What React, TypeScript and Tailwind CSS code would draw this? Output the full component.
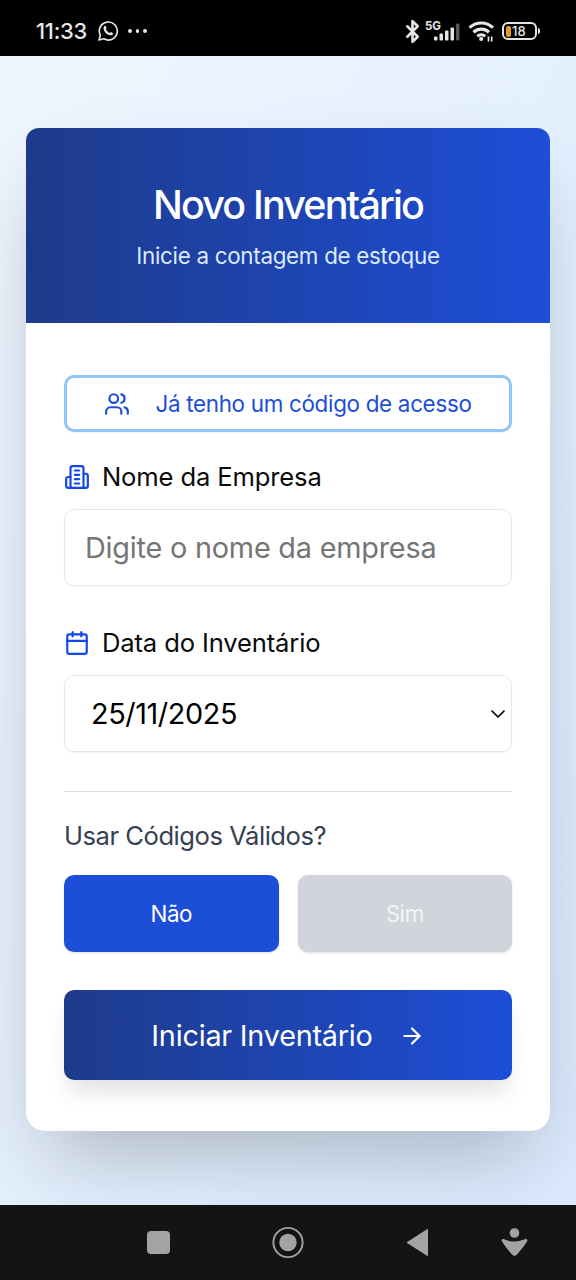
import { ArrowRight, Bluetooth, Calendar, ChevronDown } from "lucide-react";
import type { ReactNode } from "react";

function StatusBar() {
  return (
    <div className="flex h-14 shrink-0 items-center bg-black pl-9 pt-1.5 text-[#e6e6e6]">
      <span className="w-[61px] text-[22px] leading-none font-medium tracking-[-0.3px]">11:33</span>

      {/* WhatsApp */}
      <svg className="h-[22px] w-[22px]" viewBox="0 0 22 22" fill="none">
        <path d="M2 20l1.4-4.7A9 9 0 1 1 6.8 18.8Z" stroke="currentColor" strokeWidth="1.7" strokeLinejoin="round" />
        <path
          d="M7.1 6.2c.6-.7 1.4-.7 1.7 0l.7 1.6c.2.5-.6 1.1-.6 1.5.3 1.3 2.2 3.1 3.6 3.6.5.1 1-.9 1.5-.8l1.7.8c.6.4.2 1.5-.5 2-2.2 1.3-5.1-.4-6.7-2.1S5.800 8 7.100 6.200Z"
          fill="currentColor"
        />
      </svg>

      {/* Notifications */}
      <div className="ml-[9px] flex gap-[4px]">
        <span className="h-[3.500px] w-[3.500px] rounded-full bg-current"></span>
        <span className="h-[3.500px] w-[3.500px] rounded-full bg-current"></span>
        <span className="h-[3.500px] w-[3.500px] rounded-full bg-current"></span>
      </div>

      <div className="ml-auto flex items-center pr-9">
        <Bluetooth className="h-[25px] w-[25px]" strokeWidth={2.5} />
        <svg className="h-6 w-[36px] overflow-visible" viewBox="0 0 36 24">
          <text x="0" y="10.500" fontSize="11.500" fontWeight="700" fill="currentColor">5G</text>
          <rect x="9" y="17.500" width="3.500" height="4" rx="1" fill="currentColor" />
          <rect x="14.500" y="14.500" width="3.500" height="7" rx="1" fill="currentColor" />
          <rect x="20" y="11.500" width="3.500" height="10" rx="1" fill="currentColor" />
          <rect x="25.500" y="8.500" width="3.500" height="13" rx="1" fill="currentColor" />
          <rect x="31" y="4.500" width="3.500" height="17" rx="1" fill="#555" />
        </svg>
        <svg className="ml-[7px] h-6 w-[28px]" viewBox="0 0 28 24" fill="none" stroke="currentColor" strokeWidth="3.200">
          <path d="M1.500 8.700a17 17 0 0 1 23.500 0" />
          <path d="M5.500 13.200a11.500 11.500 0 0 1 15.500 0" />
          <path d="M9.300 17.300a6.200 6.200 0 0 1 7.900 0" />
          <circle cx="13.200" cy="20" r="2.100" fill="currentColor" stroke="none" />
          <path d="M20.500 22.500v-5M23.700 17.500v5" strokeWidth="1.700" />
        </svg>
        <div className="ml-[6px] flex h-[18px] w-[35px] items-center rounded-[6px] border-2 border-current pl-[2px]">
          <span className="h-[11px] w-[5px] rounded-[2px] bg-[#e99a2b]"></span>
          <span className="pl-px text-[13px] leading-none font-medium">18</span>
        </div>
        <span className="ml-px h-1.5 w-[2px] rounded-r bg-current"></span>
      </div>
    </div>
  );
}

function UsersIcon() {
  return (
    <svg className="h-[26px] w-[26px]" viewBox="0 0 24 24" fill="none" stroke="currentColor" strokeWidth="2" strokeLinecap="round" strokeLinejoin="round">
      <path d="M16 21v-2a4 4 0 0 0-4-4H6a4 4 0 0 0-4 4v2" />
      <circle cx="9" cy="7" r="4" />
      <path d="M22 21v-2a4 4 0 0 0-3-3.870" />
      <path d="M16 3.130a4 4 0 0 1 0 7.750" />
    </svg>
  );
}

function BuildingIcon() {
  return (
    <svg className="h-[26px] w-[26px]" viewBox="0 0 24 24" fill="none" stroke="currentColor" strokeWidth="2" strokeLinecap="round" strokeLinejoin="round">
      <path d="M6 22V4a2 2 0 0 1 2-2h8a2 2 0 0 1 2 2v18Z" />
      <path d="M6 12H4a2 2 0 0 0-2 2v6a2 2 0 0 0 2 2h2" />
      <path d="M18 9h2a2 2 0 0 1 2 2v9a2 2 0 0 1-2 2h-2" />
      <path d="M10 6h4M10 10h4M10 14h4M10 18h4" />
    </svg>
  );
}

function FieldLabel({ icon, children }: { icon: ReactNode; children: ReactNode }) {
  return (
    <div className="flex h-[26px] items-center gap-3 text-[25.6px] leading-none tracking-[-0.15px] whitespace-nowrap text-[#0a0a0a]">
      <span className="text-blue-700">{icon}</span>
      {children}
    </div>
  );
}

function NavBar() {
  return (
    <div className="flex h-[75px] shrink-0 items-center bg-[#141414] pl-[146px]">
      <svg className="h-[34px] w-[384px]" viewBox="0 0 384 34" fill="#a3a3a3">
        <rect x="1" y="5" width="23" height="23" rx="4" />
        <circle cx="142" cy="16.500" r="14.600" fill="none" stroke="#a3a3a3" strokeWidth="1.900" />
        <circle cx="142" cy="16.500" r="8.700" />
        <path d="M282 3.700v25.600a.7.7 0 0 1-1 .5l-19.500-12.500a1 1 0 0 1 0-1.600L281 3.200a.7.7 0 0 1 1 .5Z" />
        <circle cx="368.500" cy="7" r="4.800" />
        <path d="M357.500 13c7 3.300 15 3.300 22 0 1.500-.5 2.500 1.200 1.500 2.500-2.500 4-6.500 9-10 13-1.500 1.600-3.500 1.600-5 0-3.500-4-7.500-9-10-13-1-1.300 0-3 1.500-2.500Z" />
      </svg>
    </div>
  );
}

export default function App() {
  return (
    <div className="flex h-[1280px] w-[576px] flex-col overflow-hidden font-[Inter,sans-serif]">
      <StatusBar />

      <main className="flex-1 bg-linear-to-br from-[#eff6ff] to-[#dbeafe] px-[25.6px] pt-[72px]">
        <div className="h-[1003px] rounded-[19px] bg-white shadow-[0_40px_80px_-19px_rgba(0,0,0,0.25)]">
          <header className="flex h-[195px] flex-col items-center rounded-t-[13px] bg-linear-to-r from-[#1e3a8a] to-[#1d4ed8] pt-[57px] whitespace-nowrap">
            <h1 className="text-[39.5px] leading-10 font-medium tracking-[-1.85px] text-white">Novo Inventário</h1>
            <p className="mt-[15px] text-[22.4px] leading-8 tracking-[-0.3px] text-blue-100">Inicie a contagem de estoque</p>
          </header>

          <div className="flex flex-col px-[38.4px] pt-[52px]">
            <button className="flex h-[57px] items-center justify-center gap-[25px] rounded-[10px] border-[3px] border-[#93c5fd] text-[22.4px] tracking-[-0.3px] whitespace-nowrap text-[#1d4ed8] shadow-xs">
              <UsersIcon />
              Já tenho um código de acesso
            </button>

            <div className="mt-8">
              <FieldLabel icon={<BuildingIcon />}>Nome da Empresa</FieldLabel>
              <input
                className="mt-[19px] block h-[77px] w-full rounded-[10px] border-[1.600px] border-gray-200 px-[20px] text-[28.8px] tracking-[-0.2px] shadow-xs placeholder:text-[#757575]"
                placeholder="Digite o nome da empresa"
              />
            </div>

            <div className="mt-[44px]">
              <FieldLabel icon={<Calendar className="h-[26px] w-[26px]" />}>Data do Inventário</FieldLabel>
              <div className="mt-[19px] flex h-[77px] items-center justify-between rounded-[10px] border-[1.600px] border-gray-200 pr-px pl-[26px] text-[28.8px] tracking-[-0.4px] text-black shadow-xs">
                <span>25/11/2025</span>
                <ChevronDown className="h-6 w-6" strokeWidth={1.7} />
              </div>
            </div>

            <div className="mt-[39px] border-t border-[#dcdcdc] pt-[28px]">
              <p className="text-[25.6px] leading-8 tracking-[-0.48px] whitespace-nowrap text-gray-700">Usar Códigos Válidos?</p>
              <div className="mt-[23px] grid grid-cols-2 gap-[19px] text-[22.4px] tracking-[-0.4px]">
                <button className="h-[77px] rounded-[10px] bg-[#1d4ed8] text-white shadow-sm">Não</button>
                <button className="h-[77px] rounded-[10px] bg-[#d1d5db] text-[#f3f4f6] shadow-sm">Sim</button>
              </div>
            </div>

            <button className="mt-[38px] flex h-[90px] items-center justify-center gap-[26px] rounded-[10px] bg-linear-to-r from-[#1e3a8a] to-[#1d4ed8] pt-px text-[28.8px] tracking-[-0.22px] whitespace-nowrap text-white shadow-[0_16px_24px_-5px_rgba(0,0,0,0.12)]">
              Iniciar Inventário
              <ArrowRight className="h-[26px] w-[26px]" strokeWidth={2} />
            </button>
          </div>
        </div>
      </main>

      <NavBar />
    </div>
  );
}
